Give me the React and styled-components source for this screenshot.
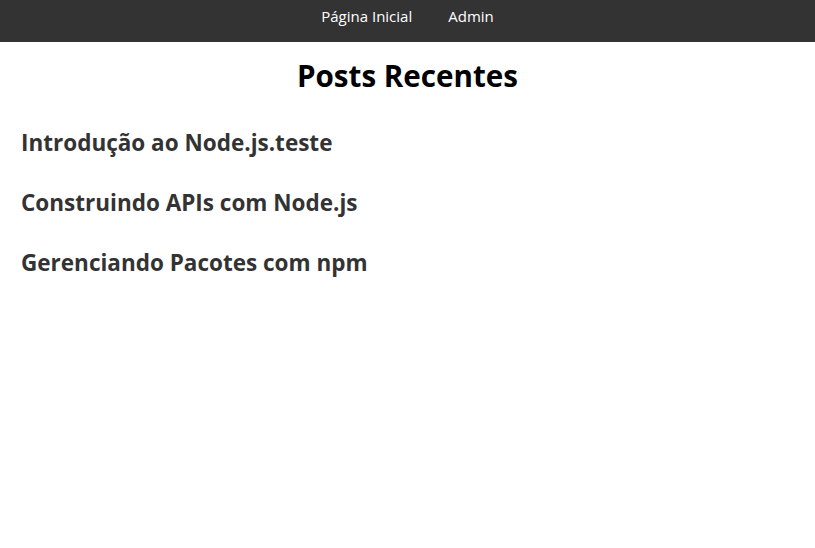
import React from 'react';
import styled, { createGlobalStyle } from 'styled-components';

const GlobalStyle = createGlobalStyle`
  body {
    margin: 0;
    font-family: "Open Sans", "Noto Sans", sans-serif;
    background: #fff;
  }
`;

const NavBar = styled.nav`
  background: #333;
  height: 42px;
  display: flex;
  justify-content: center;
  align-items: flex-start;
  padding-top: 6px;
  box-sizing: border-box;
  gap: 36px;
`;

const NavLink = styled.a`
  color: #fff;
  text-decoration: none;
  font-size: 15px;
  line-height: 20px;
  cursor: pointer;
`;

const Main = styled.main`
  padding: 0 21px;
`;

const Title = styled.h1`
  margin: 15px 0 0;
  text-align: center;
  font-size: 29.6px;
  line-height: 38px;
  color: #000;
`;

const PostList = styled.div`
  display: flex;
  flex-direction: column;
  gap: 28px;
  margin-top: 32px;
`;

const PostTitle = styled.h2`
  margin: 0;
  font-size: 22.5px;
  line-height: 32px;
  color: #333;
`;

const posts = [
  'Introdução ao Node.js.teste',
  'Construindo APIs com Node.js',
  'Gerenciando Pacotes com npm',
];

const App = () => (
  <>
    <GlobalStyle />
    <NavBar>
      <NavLink>Página Inicial</NavLink>
      <NavLink>Admin</NavLink>
    </NavBar>
    <Main>
      <Title>Posts Recentes</Title>
      <PostList>
        {posts.map(title => (
          <PostTitle key={title}>{title}</PostTitle>
        ))}
      </PostList>
    </Main>
  </>
);

export default App;
